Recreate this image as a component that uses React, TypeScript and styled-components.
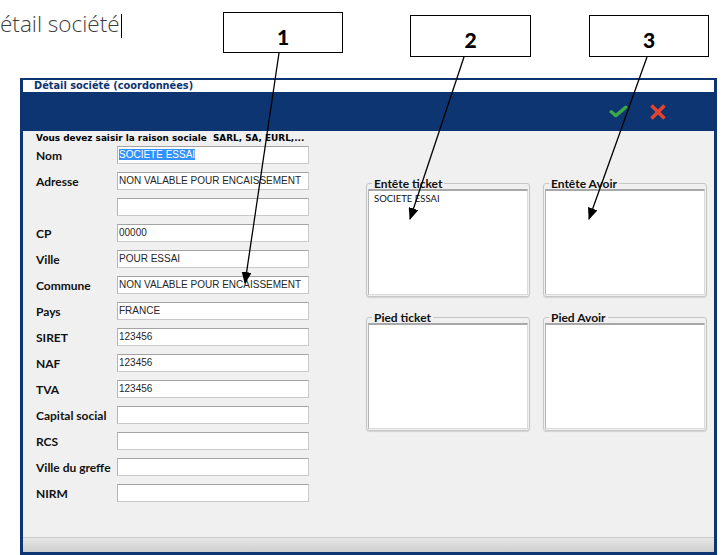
import React from "react";
import styled, { createGlobalStyle } from "styled-components";

const GlobalStyle = createGlobalStyle`
  html, body {
    margin: 0;
    padding: 0;
    background: #ffffff;
  }
  * {
    box-sizing: border-box;
  }
`;

const NAVY = "#0c3572";

interface Field {
  label: string;
  value?: string;
  selected?: boolean;
}

const FIELDS: Field[] = [
  { label: "Nom", value: "SOCIETE ESSAI", selected: true },
  { label: "Adresse", value: "NON VALABLE POUR ENCAISSEMENT" },
  { label: "" },
  { label: "CP", value: "00000" },
  { label: "Ville", value: "POUR ESSAI" },
  { label: "Commune", value: "NON VALABLE POUR ENCAISSEMENT" },
  { label: "Pays", value: "FRANCE" },
  { label: "SIRET", value: "123456" },
  { label: "NAF", value: "123456" },
  { label: "TVA", value: "123456" },
  { label: "Capital social" },
  { label: "RCS" },
  { label: "Ville du greffe" },
  { label: "NIRM" },
];

const MEMOS = [
  { title: "Entête ticket", text: "SOCIETE ESSAI" },
  { title: "Entête Avoir", text: "" },
  { title: "Pied ticket", text: "" },
  { title: "Pied Avoir", text: "" },
];

const CALLOUTS = [
  { n: "1", x: 223, y: 12, w: 120, h: 41 },
  { n: "2", x: 410, y: 15, w: 121, h: 42 },
  { n: "3", x: 589, y: 15, w: 120, h: 42 },
];

export default function App() {
  return (
    <>
      <GlobalStyle />
      <Page>
        <DocLine>
          <DocText>étail société</DocText>
          <Caret />
        </DocLine>

        <Window>
          <TitleBar>Détail société (coordonnées)</TitleBar>
          <Toolbar>
            <ToolButton title="Valider">
              <svg width="19" height="13" viewBox="0 0 19 13">
                <path
                  d="M2.2 6.8 L6.8 10.6 L16.8 2.2"
                  fill="none"
                  stroke="#3aa845"
                  strokeWidth="3.4"
                  strokeLinecap="round"
                  strokeLinejoin="round"
                />
              </svg>
            </ToolButton>
            <ToolButton title="Annuler">
              <svg width="18" height="18" viewBox="0 0 18 18">
                <path
                  d="M2.5 2.5 L15.5 15.5 M15.5 2.5 L2.5 15.5"
                  fill="none"
                  stroke="#e4432f"
                  strokeWidth="3.6"
                />
              </svg>
            </ToolButton>
          </Toolbar>

          <Body>
            <FormColumn>
              <Notice>Vous devez saisir la raison sociale&nbsp; SARL, SA, EURL,...</Notice>
              <FieldList>
                {FIELDS.map((f, i) => (
                  <FieldRow key={i}>
                    <FieldLabel>{f.label}</FieldLabel>
                    <FieldBox>
                      {f.selected ? <Selected>{f.value}</Selected> : f.value}
                    </FieldBox>
                  </FieldRow>
                ))}
              </FieldList>
            </FormColumn>

            <MemoGrid>
              {MEMOS.map((m) => (
                <GroupBox key={m.title}>
                  <GroupLegend>{m.title}</GroupLegend>
                  <Memo>{m.text}</Memo>
                </GroupBox>
              ))}
            </MemoGrid>
          </Body>

          <StatusBar />
        </Window>

        <ArrowLayer width="722" height="555" viewBox="0 0 722 555">
          <defs>
            <marker
              id="head"
              viewBox="0 0 12 10"
              refX="11"
              refY="5"
              markerUnits="userSpaceOnUse"
              markerWidth="12"
              markerHeight="10"
              orient="auto"
            >
              <path d="M0 0 L12 5 L0 10 z" fill="#000" />
            </marker>
          </defs>
          <line x1="279" y1="53" x2="245" y2="283" stroke="#000" strokeWidth="1.3" markerEnd="url(#head)" />
          <line x1="464" y1="57" x2="410" y2="219" stroke="#000" strokeWidth="1.3" markerEnd="url(#head)" />
          <line x1="647" y1="57" x2="589" y2="219" stroke="#000" strokeWidth="1.3" markerEnd="url(#head)" />
        </ArrowLayer>

        {CALLOUTS.map((c) => (
          <Callout key={c.n} $x={c.x} $y={c.y} $w={c.w} $h={c.h}>
            {c.n}
          </Callout>
        ))}
      </Page>
    </>
  );
}

const Page = styled.div`
  position: relative;
  width: 722px;
  height: 555px;
  overflow: hidden;
  background: #ffffff;
`;

const DocLine = styled.div`
  height: 78px;
  padding-top: 10px;
  display: flex;
  align-items: flex-start;
`;

const DocText = styled.span`
  font-family: "Open Sans", "Lato", sans-serif;
  font-weight: 300;
  font-size: 22.5px;
  line-height: 28px;
  color: #3d3d3d;
`;

const Caret = styled.span`
  display: inline-block;
  width: 1px;
  height: 24px;
  margin-top: 4px;
  margin-left: 1px;
  background: #000;
`;

const Window = styled.div`
  margin-left: 20px;
  width: 697px;
  height: 477px;
  border: 3px solid ${NAVY};
  border-top-width: 2px;
  display: flex;
  flex-direction: column;
  background: #f0f0f0;
`;

const TitleBar = styled.div`
  height: 12px;
  background: #ffffff;
  padding-left: 11px;
  font-family: "DejaVu Sans", sans-serif;
  font-weight: bold;
  font-size: 9.8px;
  line-height: 12px;
  color: ${NAVY};
`;

const Toolbar = styled.div`
  height: 39px;
  background: ${NAVY};
  display: flex;
  align-items: center;
  justify-content: flex-end;
  gap: 21px;
  padding-right: 47px;
`;

const ToolButton = styled.span`
  display: flex;
  align-items: center;
  justify-content: center;
  cursor: pointer;
`;

const Body = styled.div`
  flex: 1;
  display: flex;
  align-items: flex-start;
  background: #f0f0f0;
`;

const FormColumn = styled.div`
  padding: 2px 0 0 13px;
  display: flex;
  flex-direction: column;
`;

const Notice = styled.div`
  font-family: "DejaVu Sans", sans-serif;
  font-weight: bold;
  font-size: 8.9px;
  line-height: 11px;
  color: #000;
  white-space: nowrap;
`;

const FieldList = styled.div`
  margin-top: 2px;
  display: flex;
  flex-direction: column;
  gap: 8px;
`;

const FieldRow = styled.div`
  display: flex;
  align-items: center;
  height: 18px;
`;

const FieldLabel = styled.span`
  width: 81px;
  font-family: "Lato", "Open Sans", sans-serif;
  font-weight: 700;
  font-size: 12px;
  color: #111;
  white-space: nowrap;
`;

const FieldBox = styled.div`
  width: 192px;
  height: 18px;
  background: #ffffff;
  border: 1px solid #c9c9c9;
  border-top-color: #a3a3a3;
  border-left-color: #b5b5b5;
  padding: 2px 0 0 1px;
  font-family: "Liberation Sans", Arial, sans-serif;
  font-size: 10px;
  line-height: 12px;
  color: #262626;
  white-space: nowrap;
  overflow: hidden;
`;

const Selected = styled.span`
  background: #3390ff;
  color: #ffffff;
`;

const MemoGrid = styled.div`
  margin: 47px 0 0 57px;
  display: grid;
  grid-template-columns: 164px 164px;
  column-gap: 13px;
  row-gap: 15px;
`;

const GroupBox = styled.fieldset`
  margin: 0;
  padding: 0 1px 1px;
  border: 1px solid #c6c6c6;
  border-radius: 3px;
  box-shadow: 0 1px 1px rgba(0, 0, 0, 0.12);
  min-width: 0;
`;

const GroupLegend = styled.legend`
  margin-left: 4px;
  padding: 0 2px;
  font-family: "Lato", "Open Sans", sans-serif;
  font-weight: 700;
  font-size: 12px;
  line-height: 11px;
  color: #111;
`;

const Memo = styled.div`
  height: 106px;
  background: #ffffff;
  border-top: 2px solid #a8a8a8;
  border-left: 1px solid #b4b4b4;
  border-right: 1px solid #dadada;
  border-bottom: 1px solid #dadada;
  padding: 2px 0 0 5px;
  font-family: "Lato", "Open Sans", sans-serif;
  font-size: 9.5px;
  line-height: 11px;
  color: #111;
`;

const StatusBar = styled.div`
  height: 15px;
  border-top: 1px solid #c9c9c9;
  background: linear-gradient(#e7e7e7, #cdcdcd);
`;

const ArrowLayer = styled.svg`
  position: absolute;
  left: 0;
  top: 0;
  pointer-events: none;
`;

const Callout = styled.div<{ $x: number; $y: number; $w: number; $h: number }>`
  position: absolute;
  left: ${(p) => p.$x}px;
  top: ${(p) => p.$y}px;
  width: ${(p) => p.$w}px;
  height: ${(p) => p.$h}px;
  border: 1px solid #000;
  background: #ffffff;
  display: flex;
  justify-content: center;
  align-items: center;
  padding-top: 7px;
  font-family: "Lato", "Open Sans", sans-serif;
  font-weight: 900;
  font-size: 21px;
  color: #000;
`;
